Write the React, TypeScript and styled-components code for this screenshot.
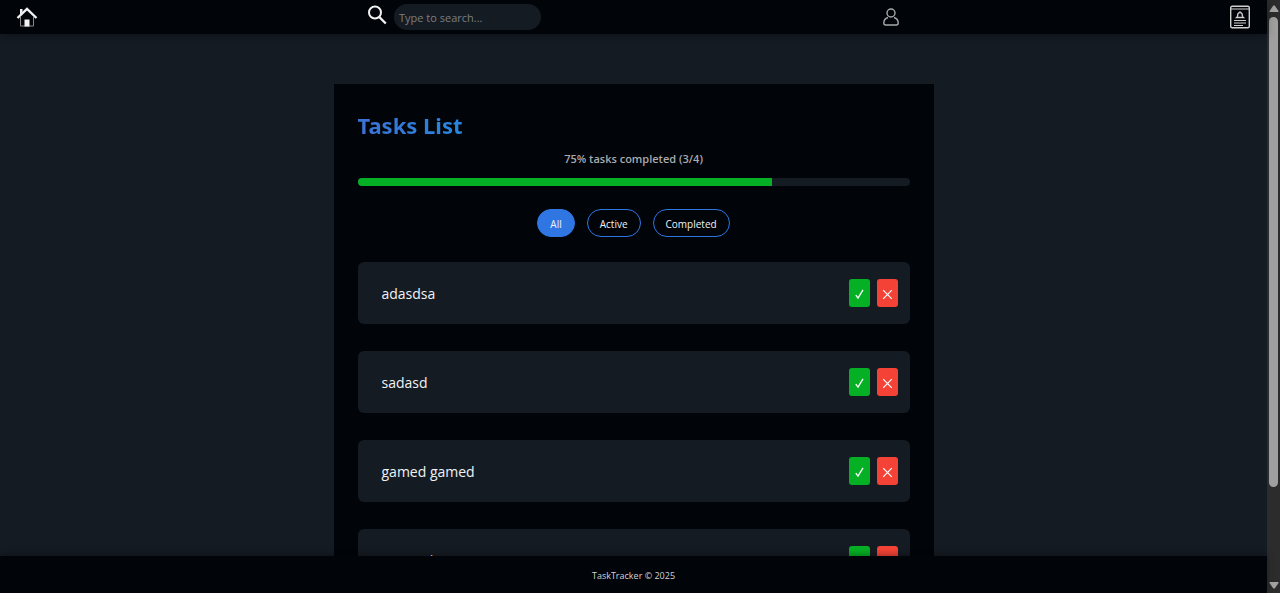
import React, { useState } from "react";
import styled, { createGlobalStyle } from "styled-components";

const color = {
  page: "#151b23",
  panel: "#010409",
  blue: "#2f76e3",
  green: "#06b025",
  red: "#f44336",
  text: "#f0f3f6",
  muted: "#a9abad",
};

const GlobalStyle = createGlobalStyle`
  * { box-sizing: border-box; }
  body {
    margin: 0;
    background: ${color.page};
    color: ${color.text};
    font-family: "Segoe UI", "Open Sans", sans-serif;
  }
  button, input { font-family: inherit; }
`;

const Shell = styled.div`
  display: grid;
  grid-template-columns: minmax(0, 1fr) 13px;
  height: 100vh;
`;

const Page = styled.div`
  display: flex;
  flex-direction: column;
  min-height: 0;
`;

const TopBar = styled.header`
  display: flex;
  justify-content: space-between;
  align-items: center;
  flex: none;
  height: 34px;
  padding: 0 16px;
  background: ${color.panel};
  box-shadow: 0 2px 8px rgba(0, 0, 0, 0.3);
  z-index: 1;
`;

const IconLink = styled.a`
  display: flex;
  color: #f2f2f2;
`;

const ProfileLink = styled(IconLink)`
  padding-left: 12px;
`;

const Search = styled.form`
  display: flex;
  align-items: center;
  gap: 6px;
`;

const SearchButton = styled.button`
  display: flex;
  padding: 0 0 4px;
  border: 0;
  background: none;
  color: #f2f2f2;
`;

const SearchInput = styled.input`
  width: 147px;
  height: 26px;
  padding: 0 5px;
  border: 0;
  border-radius: 13px;
  background: ${color.page};
  color: ${color.text};
  font-size: 11px;
  &::placeholder { color: #7b7e82; opacity: 1; }
`;

const Main = styled.main`
  flex: 1;
  min-height: 0;
  padding: 50px 16px;
  overflow-y: auto;
  scrollbar-width: none;
`;

const Panel = styled.section`
  max-width: 600px;
  margin: 0 auto;
  padding: 24px;
  background: ${color.panel};
`;

const Title = styled.h1`
  width: fit-content;
  margin: 0;
  font-family: "Segoe UI", "Noto Sans", sans-serif;
  font-size: 22px;
  line-height: 34px;
  color: transparent;
  background: linear-gradient(90deg, #3c72d4, #2787e0);
  background-clip: text;
`;

const Progress = styled.div`
  display: flex;
  flex-direction: column;
  gap: 11px;
  margin-top: 8px;
`;

const ProgressLabel = styled.p`
  margin: 0;
  text-align: center;
  font-size: 11px;
  line-height: 17px;
  font-weight: 600;
  color: ${color.muted};
`;

const Track = styled.div`
  height: 8px;
  border-radius: 4px;
  background: ${color.page};
  overflow: hidden;
`;

const Fill = styled.div`
  height: 100%;
  background: ${color.green};
`;

const Filters = styled.div`
  display: flex;
  justify-content: center;
  gap: 12px;
  margin: 23px 0 25px;
`;

const FilterButton = styled.button<{ $active: boolean }>`
  height: 28px;
  padding: 2px 12px 0;
  border: 1px solid ${color.blue};
  border-radius: 14px;
  background: ${(p) => (p.$active ? color.blue : "transparent")};
  color: ${color.text};
  font-size: 10px;
`;

const TaskList = styled.ul`
  display: flex;
  flex-direction: column;
  gap: 27px;
  margin: 0;
  padding: 0;
  list-style: none;
`;

const TaskRow = styled.li`
  display: flex;
  align-items: center;
  justify-content: space-between;
  min-height: 62px;
  padding: 0 12px 0 24px;
  border-radius: 6px;
  background: ${color.page};
`;

const TaskName = styled.span`
  padding-top: 2px;
  font-size: 14px;
  line-height: 20px;
`;

const Actions = styled.div`
  display: flex;
  gap: 7px;
`;

const ActionButton = styled.button<{ $tone: string }>`
  display: flex;
  align-items: center;
  justify-content: center;
  width: 21px;
  height: 28px;
  padding: 2px 0 0;
  border: 0;
  border-radius: 3px;
  background: ${(p) => p.$tone};
  color: #fff;
`;

const Footer = styled.footer`
  flex: none;
  padding: 11px 10px 8px;
  background: ${color.panel};
  box-shadow: 0 -2px 6px rgba(0, 0, 0, 0.3);
  text-align: center;
  font-size: 9px;
  line-height: 18px;
  color: #d0d2d4;
  z-index: 1;
`;

const ScrollRail = styled.div`
  display: flex;
  flex-direction: column;
  align-items: center;
  padding: 5px 0 4px;
  background: #2c2c2c;
  color: #a2a2a2;
`;

const ScrollTrack = styled.div`
  flex: 1;
  padding: 5px 0;
`;

const ScrollThumb = styled.div`
  width: 9px;
  height: 84%;
  border-radius: 5px;
  background: #9f9f9f;
`;

const HomeIcon = () => (
  <svg width="22" height="22" viewBox="0 0 22 22" fill="none" aria-hidden="true">
    <path d="M4.500 11v9h13v-9" stroke="#888" />
    <path d="M8.500 20.500v-7h5v7z" fill="currentColor" />
    <path d="M1.500 12 11 3l9.500 9" stroke="currentColor" strokeWidth="2.400" />
    <path d="M4 3h2.500v3L4 8.500z" fill="currentColor" />
  </svg>
);

const SearchIcon = () => (
  <svg width="21" height="20" viewBox="0 0 21 20" fill="none" stroke="currentColor" aria-hidden="true">
    <circle cx="8" cy="7.500" r="6" strokeWidth="2" />
    <path d="m12.300 12 6.500 6.500" strokeWidth="2.400" />
  </svg>
);

const UserIcon = () => (
  <svg width="18" height="20" viewBox="0 0 18 20" fill="none" stroke="#a9a9aa" strokeWidth="1.400" aria-hidden="true">
    <circle cx="9" cy="6" r="4" />
    <path d="M6 10.500c-2.700.8-4.200 2.800-4.200 5.500 0 1.400.6 2 2 2h10.400c1.400 0 2-.6 2-2 0-2.700-1.500-4.700-4.200-5.500" />
  </svg>
);

const NoticeIcon = () => (
  <svg width="22" height="24" viewBox="0 0 22 24" fill="none" stroke="#cfcfcf" strokeWidth="1.400" aria-hidden="true">
    <rect x="1.700" y="1.200" width="18.600" height="21.600" rx="1.500" />
    <path d="M2 4h18M5 15.500h12M5 18h12M5 20.500h9" strokeWidth="1.200" />
    <path d="M7.700 12.500c1.300-1 .8-2.500 1.300-3.800.6-1.400 3.400-1.400 4 0 .5 1.300 0 2.800 1.300 3.800zM11 6.200v1.300" />
  </svg>
);

const CheckIcon = () => (
  <svg width="11" height="12" viewBox="0 0 11 12" fill="none" stroke="currentColor" strokeWidth="1.300" aria-hidden="true">
    <path d="m1.800 7.200 2.200 2.900L9 1.800" />
  </svg>
);

const CrossIcon = () => (
  <svg width="11" height="11" viewBox="0 0 11 11" fill="none" stroke="currentColor" strokeWidth="1.200" aria-hidden="true">
    <path d="m1.200 1.200 8.600 8.600M9.800 1.200 1.200 9.800" />
  </svg>
);

const Arrow = ({ down = false }: { down?: boolean }) => (
  <svg width="10" height="7" viewBox="0 0 10 7" fill="currentColor" aria-hidden="true">
    <path d={down ? "M1 0h8q1 0 .5 1L6 6q-1 1.400-2 0L.5 1Q0 0 1 0z" : "M1 7h8q1 0 .5-1L6 1Q5-.4 4 1L.5 6Q0 7 1 7z"} />
  </svg>
);

const filters = ["All", "Active", "Completed"];
const tasks = ["adasdsa", "sadasd", "gamed gamed", "sasasad"];

export default function App() {
  const [filter, setFilter] = useState("All");
  const done = 3;
  const percent = (done / tasks.length) * 100;

  return (
    <>
      <GlobalStyle />
      <Shell>
        <Page>
          <TopBar>
            <IconLink href="#home" aria-label="Home"><HomeIcon /></IconLink>
            <Search role="search" onSubmit={(e) => e.preventDefault()}>
              <SearchButton aria-label="Search"><SearchIcon /></SearchButton>
              <SearchInput type="text" aria-label="Search tasks" placeholder="Type to search..." />
            </Search>
            <ProfileLink href="#profile" aria-label="Profile"><UserIcon /></ProfileLink>
            <IconLink href="#notices" aria-label="Notices"><NoticeIcon /></IconLink>
          </TopBar>
          <Main>
            <Panel>
              <Title>Tasks List</Title>
              <Progress>
                <ProgressLabel>{percent}% tasks completed ({done}/{tasks.length})</ProgressLabel>
                <Track><Fill style={{ width: `${percent}%` }} /></Track>
              </Progress>
              <Filters>
                {filters.map((name) => (
                  <FilterButton key={name} $active={filter === name} onClick={() => setFilter(name)}>
                    {name}
                  </FilterButton>
                ))}
              </Filters>
              <TaskList>
                {tasks.map((name) => (
                  <TaskRow key={name}>
                    <TaskName>{name}</TaskName>
                    <Actions>
                      <ActionButton $tone={color.green} aria-label="Complete"><CheckIcon /></ActionButton>
                      <ActionButton $tone={color.red} aria-label="Delete"><CrossIcon /></ActionButton>
                    </Actions>
                  </TaskRow>
                ))}
              </TaskList>
            </Panel>
          </Main>
          <Footer>TaskTracker © 2025</Footer>
        </Page>
        <ScrollRail aria-hidden="true">
          <Arrow />
          <ScrollTrack><ScrollThumb /></ScrollTrack>
          <Arrow down />
        </ScrollRail>
      </Shell>
    </>
  );
}
